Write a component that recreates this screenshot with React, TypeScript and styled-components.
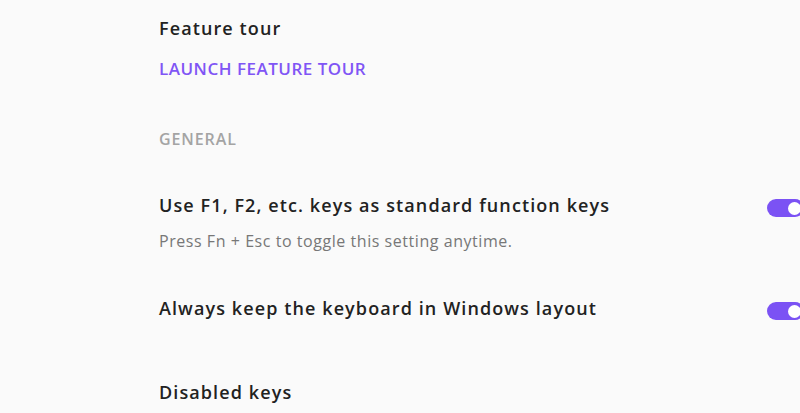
import styled, { createGlobalStyle } from "styled-components";

const Global = createGlobalStyle`
  html, body {
    margin: 0;
    padding: 0;
    background: #fafafa;
    overflow: hidden;
  }
  body {
    font-family: "Open Sans", "Noto Sans", sans-serif;
  }
`;

const Page = styled.div`
  width: 800px;
  height: 413px;
  overflow: hidden;
  box-sizing: border-box;
  padding: 17px 0 0 159px;
  display: flex;
  flex-direction: column;
`;

const Title = styled.div<{ $gap?: number }>`
  margin-top: ${(p) => p.$gap ?? 0}px;
  font-size: 18px;
  line-height: 22px;
  font-weight: 600;
  letter-spacing: 1.1px;
  color: #222;
`;

const LinkButton = styled.a`
  margin-top: 20px;
  font-size: 17px;
  line-height: 20px;
  font-weight: 600;
  letter-spacing: 0.5px;
  color: #8055f5;
  text-decoration: none;
  cursor: pointer;
`;

const SectionLabel = styled.div`
  margin-top: 50px;
  font-size: 16px;
  line-height: 20px;
  font-weight: 600;
  letter-spacing: 0.9px;
  color: #a4a4a4;
`;

const SettingRow = styled.div<{ $gap: number }>`
  margin-top: ${(p) => p.$gap}px;
  display: flex;
  justify-content: space-between;
  align-items: flex-start;
  margin-right: -4px;
`;

const SettingText = styled.div`
  display: flex;
  flex-direction: column;
`;

const Hint = styled.div`
  margin-top: 15px;
  font-size: 16px;
  line-height: 20px;
  letter-spacing: 0.55px;
  color: #777;
`;

const Toggle = styled.div<{ $on: boolean }>`
  margin-top: 5px;
  width: 37px;
  height: 18px;
  border-radius: 9px;
  background: ${(p) => (p.$on ? "#7b52f4" : "#bbb")};
  display: flex;
  align-items: center;
  justify-content: ${(p) => (p.$on ? "flex-end" : "flex-start")};
  padding: 0 3px;
  box-sizing: border-box;

  &::after {
    content: "";
    width: 13px;
    height: 13px;
    border-radius: 50%;
    background: #fff;
  }
`;

export default function App() {
  return (
    <>
      <Global />
      <Page>
        <Title>Feature tour</Title>
        <LinkButton>LAUNCH FEATURE TOUR</LinkButton>
        <SectionLabel>GENERAL</SectionLabel>
        <SettingRow $gap={45}>
          <SettingText>
            <Title>Use F1, F2, etc. keys as standard function keys</Title>
            <Hint>Press Fn + Esc to toggle this setting anytime.</Hint>
          </SettingText>
          <Toggle $on />
        </SettingRow>
        <SettingRow $gap={46}>
          <SettingText>
            <Title>Always keep the keyboard in Windows layout</Title>
          </SettingText>
          <Toggle $on />
        </SettingRow>
        <Title $gap={61}>Disabled keys</Title>
      </Page>
    </>
  );
}
